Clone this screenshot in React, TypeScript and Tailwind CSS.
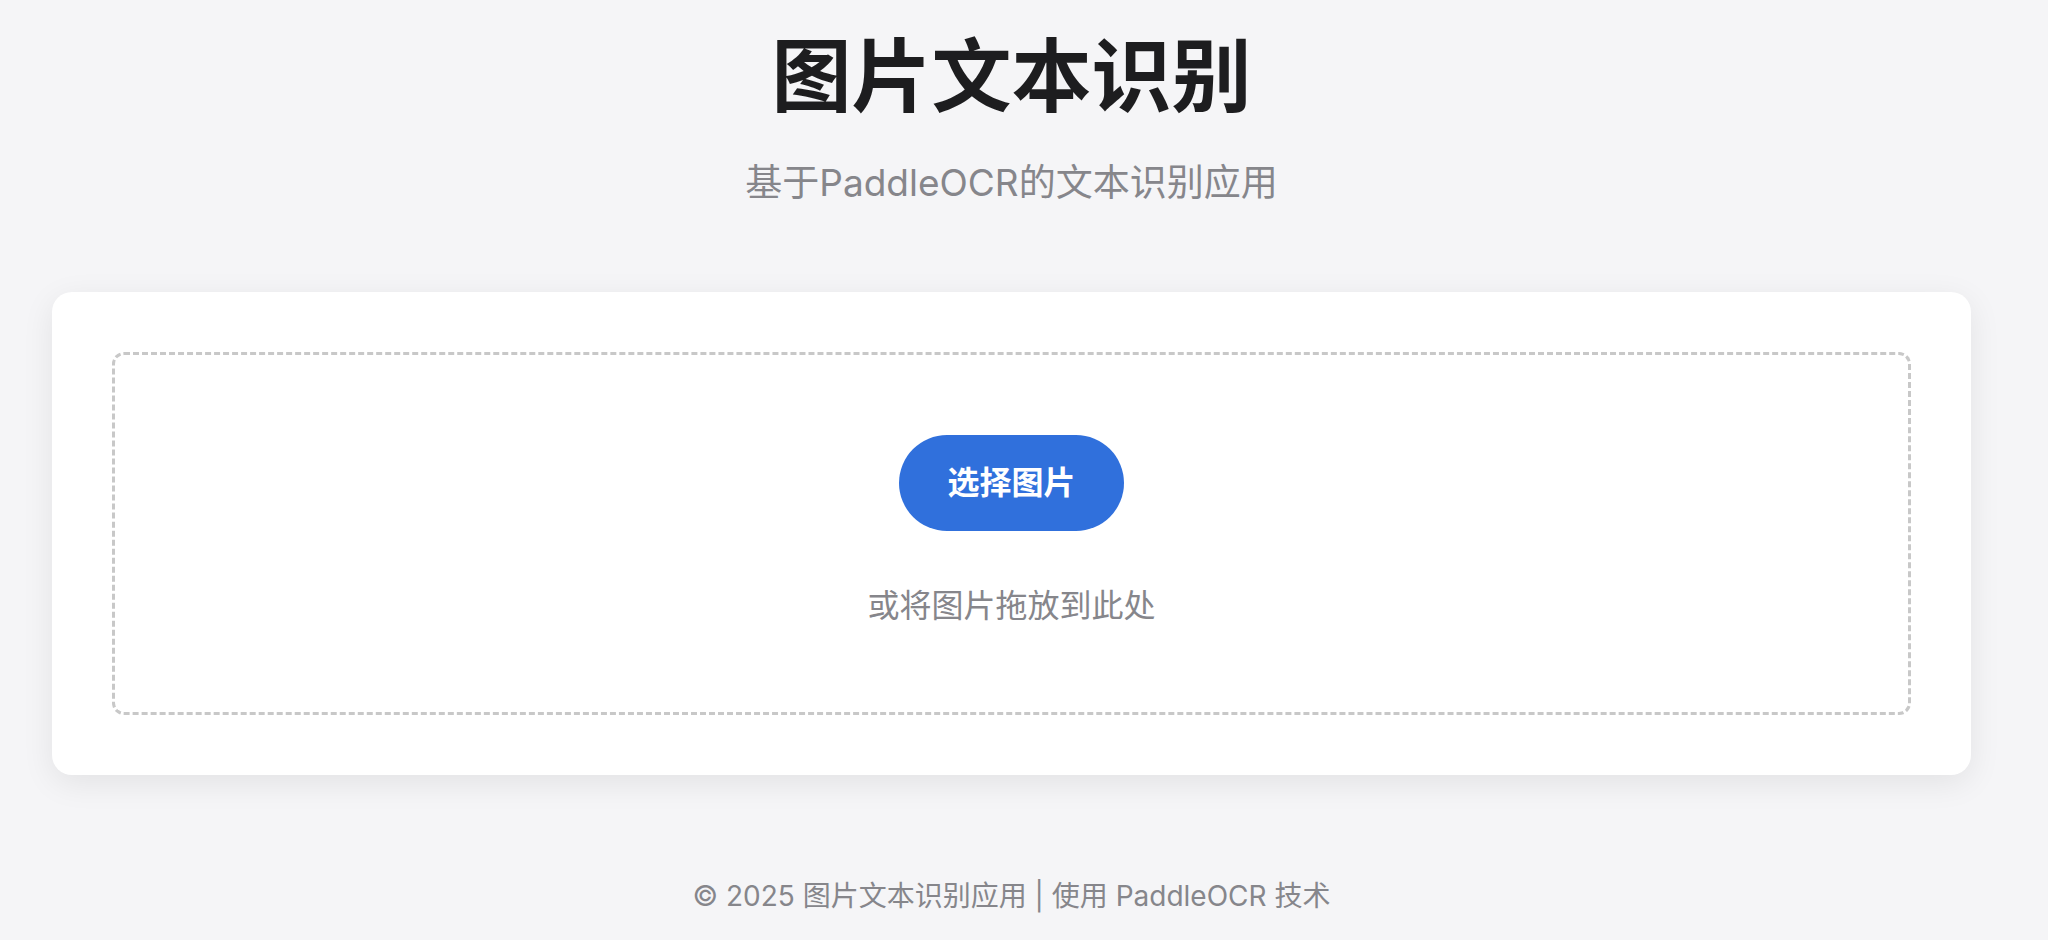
export default function App() {
  const font = { fontFamily: 'Inter, "Noto Sans CJK SC", "Noto Sans", sans-serif' };
  return (
    <div className="min-h-screen bg-[#f5f5f7] pt-[28px] pl-[52px] pr-[77px]" style={font}>
      <h1 className="text-center text-[80px] leading-[96px] font-bold text-[#1d1d1f]">图片文本识别</h1>
      <p className="mt-[31px] text-center text-[37px] leading-[56px] text-[#86868b]">基于PaddleOCR的文本识别应用</p>
      <div className="mt-[81px] bg-white rounded-[20px] p-[60px] shadow-[0_8px_32px_rgba(0,0,0,0.08)]">
        <div className="border-[3px] border-dashed border-[#c8c8c8] rounded-[12px] pt-[80px] pb-[82px] flex flex-col items-center">
          <button className="bg-[#3070dc] text-white text-[32px] leading-[48px] font-bold px-[48px] py-[24px] rounded-full">
            选择图片
          </button>
          <p className="mt-[51px] text-[32px] leading-[48px] text-[#86868b]">或将图片拖放到此处</p>
        </div>
      </div>
      <footer className="mt-[100px] text-center text-[28px] leading-[42px] text-[#86868b]">
        © 2025 图片文本识别应用 | 使用 PaddleOCR 技术
      </footer>
    </div>
  );
}
